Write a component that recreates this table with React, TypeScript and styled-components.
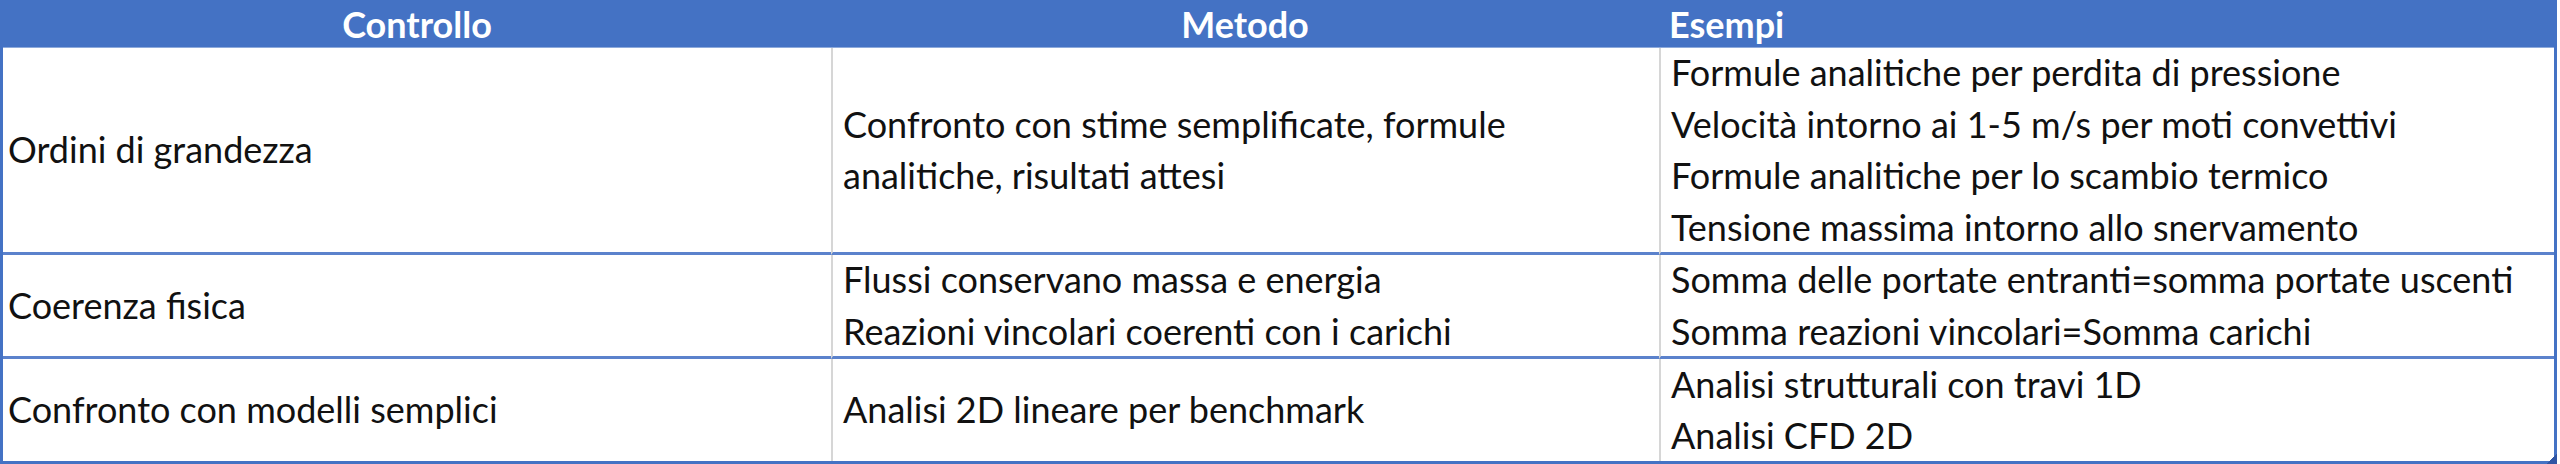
import styled, { createGlobalStyle } from "styled-components";

const GlobalStyle = createGlobalStyle`
  body {
    margin: 0;
    background: #fff;
    font-family: Lato, "Liberation Sans", sans-serif;
  }
`;

const rows = [
  {
    check: "Ordini di grandezza",
    method: ["Confronto con stime semplificate, formule", "analitiche, risultati attesi"],
    examples: [
      "Formule analitiche per perdita di pressione",
      "Velocità intorno ai 1-5 m/s per moti convettivi",
      "Formule analitiche per lo scambio termico",
      "Tensione massima intorno allo snervamento",
    ],
  },
  {
    check: "Coerenza fisica",
    method: ["Flussi conservano massa e energia", "Reazioni vincolari coerenti con i carichi"],
    examples: [
      "Somma delle portate entranti=somma portate uscenti",
      "Somma reazioni vincolari=Somma carichi",
    ],
  },
  {
    check: "Confronto con modelli semplici",
    method: ["Analisi 2D lineare per benchmark"],
    examples: ["Analisi strutturali con travi 1D", "Analisi CFD 2D"],
  },
];

const Table = styled.div`
  position: relative;
  width: 2557px;
  display: grid;
  grid-template-columns: 828px 828px 1fr;
  grid-template-rows: 48px 207px 104px 102px;
  border: solid #4472c4;
  border-width: 0 3px 3px 3px;
  box-sizing: border-box;
  font-size: 36px;
  color: #111;
`;

const HeadCell = styled.div<{ $align: "center" | "left" }>`
  background: #4472c4;
  color: #fff;
  font-weight: 700;
  display: flex;
  align-items: center;
  justify-content: ${(p) => (p.$align === "center" ? "center" : "flex-start")};
  padding: 0 10px;
  border-bottom: 1px solid #8eaadb;
`;

const Cell = styled.div<{ $first?: boolean; $last?: boolean }>`
  display: flex;
  flex-direction: column;
  justify-content: center;
  min-height: 0;
  padding: 0 10px 0 ${(p) => (p.$first ? "5px" : "10px")};
  border-left: ${(p) => (p.$first ? "none" : "2px solid #d6d6d6")};
  border-bottom: ${(p) => (p.$last ? "none" : "3px solid #5b82cc")};
  line-height: 51.5px;
  white-space: nowrap;
`;

const Line = styled.span`
  display: block;
`;

const Handle = styled.div`
  position: absolute;
  right: -3px;
  bottom: -3px;
  width: 11px;
  height: 11px;
  background: linear-gradient(135deg, transparent 50%, #2f55a4 50%);
`;

export default function App() {
  return (
    <>
      <GlobalStyle />
      <Table>
        <HeadCell $align="center">Controllo</HeadCell>
        <HeadCell $align="center">Metodo</HeadCell>
        <HeadCell $align="left">Esempi</HeadCell>
        {rows.map((row, i) => {
          const last = i === rows.length - 1;
          return [
            <Cell key={`c${i}`} $first $last={last}>
              <Line>{row.check}</Line>
            </Cell>,
            <Cell key={`m${i}`} $last={last}>
              {row.method.map((m) => (
                <Line key={m}>{m}</Line>
              ))}
            </Cell>,
            <Cell key={`e${i}`} $last={last}>
              {row.examples.map((e) => (
                <Line key={e}>{e}</Line>
              ))}
            </Cell>,
          ];
        })}
        <Handle />
      </Table>
    </>
  );
}
